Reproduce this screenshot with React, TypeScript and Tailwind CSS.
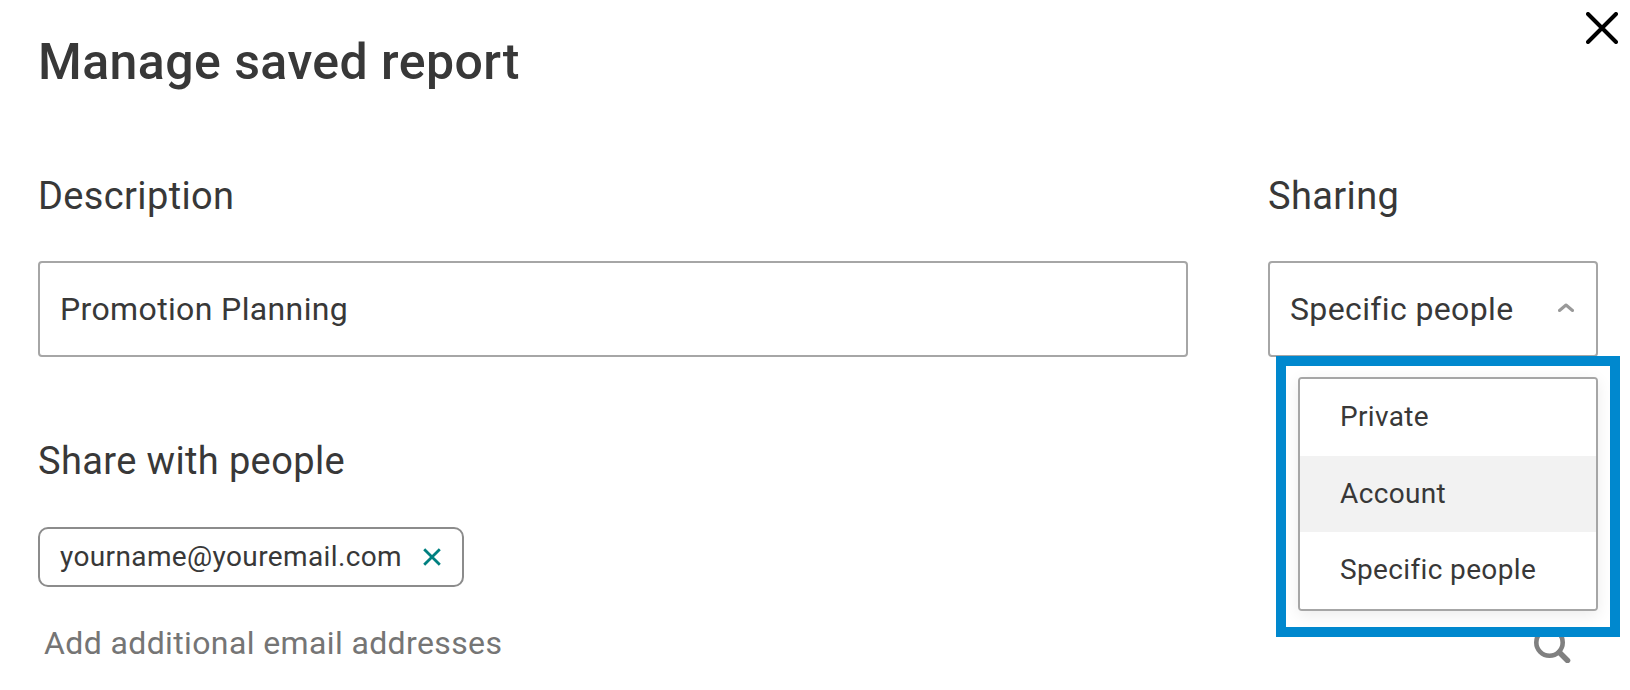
import React from "react";

interface OptionProps {
	label: string;
	active?: boolean;
}

interface FieldProps {
	label: string;
	className?: string;
	children: React.ReactNode;
}

const options: OptionProps[] = [
	{ label: "Private" },
	{ label: "Account", active: true },
	{ label: "Specific people" },
];

const CloseIcon = () => (
	<svg
		className="size-8"
		viewBox="0 0 32 32"
		fill="none"
		stroke="currentColor"
		strokeWidth="4"
		strokeLinecap="round"
	>
		<path d="M2 2l28 28M30 2L2 30" />
	</svg>
);

const RemoveIcon = () => (
	<svg
		className="size-[18px]"
		viewBox="0 0 18 18"
		fill="none"
		stroke="currentColor"
		strokeWidth="2.8"
	>
		<path d="M1.2 1.2l15.6 15.6M16.8 1.2L1.2 16.8" />
	</svg>
);

const ChevronUp = () => (
	<svg
		className="h-[10px] w-4"
		viewBox="0 0 16 10"
		fill="none"
		stroke="currentColor"
		strokeWidth="3"
		strokeLinecap="round"
		strokeLinejoin="round"
	>
		<path d="M1.500 7.500L8 2l6.500 5.500" />
	</svg>
);

const SearchIcon = () => (
	<svg
		className="h-9 w-[37px]"
		viewBox="0 0 37 36"
		fill="none"
		stroke="currentColor"
		strokeLinecap="round"
	>
		<circle cx="15.500" cy="15.500" r="13.200" strokeWidth="4.600" />
		<path d="M25.500 25.500l8 8" strokeWidth="5.500" />
	</svg>
);

const Field = ({ label, className, children }: FieldProps) => (
	<div className={className}>
		<h2 className="mb-[43px] text-[38px] leading-[44px] tracking-[0.37px]">{label}</h2>
		{children}
	</div>
);

const Option = ({ label, active }: OptionProps) => (
	<li
		className={`flex flex-1 items-center pb-px pl-10 text-[28px] tracking-[0.36px] ${
			active ? "bg-[#f2f2f2]" : "bg-white"
		}`}
	>
		{label}
	</li>
);

const App = () => {
	return (
		<main className="h-[690px] w-[1630px] overflow-hidden bg-white pl-[38px] pr-3 font-[Roboto,sans-serif] text-[#383838]">
			<header className="flex justify-between pt-3">
				<h1 className="mt-5 text-[50px] font-medium leading-[60px] tracking-[0.45px]">
					Manage saved report
				</h1>
				<button className="size-8 text-black" aria-label="Close">
					<CloseIcon />
				</button>
			</header>

			<div className="mt-[82px] flex gap-20">
				<Field label="Description" className="w-[1150px]">
					<div className="flex h-24 items-center rounded border-2 border-[#a6a6a6] px-5 text-[32px] tracking-[0.37px]">
						Promotion Planning
					</div>
				</Field>
				<Field label="Sharing" className="relative w-[330px]">
					<div className="flex h-24 items-center justify-between rounded border-2 border-[#a6a6a6] pl-5 pr-[22px] text-[32px] tracking-[0.37px]">
						Specific people
						<span className="pb-[3px] text-[#999]">
							<ChevronUp />
						</span>
					</div>
					<div className="absolute left-2 top-[182px] z-10 h-[281px] w-[344px] border-[10px] border-[#0088ce] bg-white pb-4 pl-3 pr-3 pt-[11px]">
						<ul className="flex h-[234px] w-[300px] flex-col overflow-hidden rounded border-2 border-[#a6a6a6] shadow-[0_4px_16px_rgba(0,0,0,0.08)]">
							{options.map((option, key) => (
								<Option {...option} key={key} />
							))}
						</ul>
					</div>
				</Field>
			</div>

			<section className="mt-[82px]">
				<h2 className="text-[38px] leading-[44px] tracking-[0.37px]">Share with people</h2>
				<div className="mt-11 flex h-[60px] w-[426px] items-center justify-between rounded-[10px] border-2 border-[#8c8c8c] pl-5 pr-[21px] text-[28px] tracking-[0.38px]">
					yourname@youremail.com
					<button className="text-[#008080]" aria-label="Remove">
						<RemoveIcon />
					</button>
				</div>
				<div className="mt-[37px] flex justify-between pl-[6px] pr-[47px] text-[32px] leading-[38px] tracking-[0.38px] text-[#757575]">
					Add additional email addresses
					<span className="mt-[3px] text-[#808080]">
						<SearchIcon />
					</span>
				</div>
			</section>
		</main>
	);
};

export default App;
